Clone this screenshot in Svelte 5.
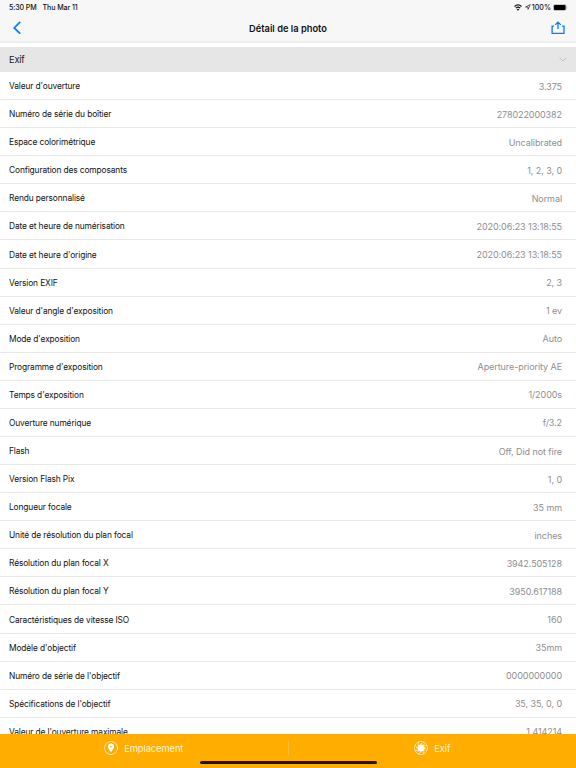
<script>
    const infos = [
        { nom: "Valeur d'ouverture", valeur: '3.375' },
        { nom: 'Numéro de série du boîtier', valeur: '278022000382' },
        { nom: 'Espace colorimétrique', valeur: 'Uncalibrated' },
        { nom: 'Configuration des composants', valeur: '1, 2, 3, 0' },
        { nom: 'Rendu personnalisé', valeur: 'Normal' },
        { nom: 'Date et heure de numérisation', valeur: '2020:06:23 13:18:55' },
        { nom: "Date et heure d'origine", valeur: '2020:06:23 13:18:55' },
        { nom: 'Version EXIF', valeur: '2, 3' },
        { nom: "Valeur d'angle d'exposition", valeur: '1 ev' },
        { nom: "Mode d'exposition", valeur: 'Auto' },
        { nom: "Programme d'exposition", valeur: 'Aperture-priority AE' },
        { nom: "Temps d'exposition", valeur: '1/2000s' },
        { nom: 'Ouverture numérique', valeur: 'f/3.2' },
        { nom: 'Flash', valeur: 'Off, Did not fire' },
        { nom: 'Version Flash Pix', valeur: '1, 0' },
        { nom: 'Longueur focale', valeur: '35 mm' },
        { nom: 'Unité de résolution du plan focal', valeur: 'inches' },
        { nom: 'Résolution du plan focal X', valeur: '3942.505128' },
        { nom: 'Résolution du plan focal Y', valeur: '3950.617188' },
        { nom: 'Caractéristiques de vitesse ISO', valeur: '160' },
        { nom: "Modèle d'objectif", valeur: '35mm' },
        { nom: "Numéro de série de l'objectif", valeur: '0000000000' },
        { nom: "Spécifications de l'objectif", valeur: '35, 35, 0, 0' },
        { nom: "Valeur de l'ouverture maximale", valeur: '1.414214' }
    ];
    const lames = [0, 45, 90, 135, 180, 225, 270, 315];

    let ouvert = $state(true);
</script>

<div class="ecran">
    <header>
        <div class="statut">
            <span class="heure">5:30 PM</span>
            <span class="date">Thu Mar 11</span>
            <div class="etat">
                <svg width="8" height="7" viewBox="0 0 8 7" fill="none" stroke="#111" stroke-width="1.2">
                    <path d="M0.5 2.5Q4 -0.7 7.5 2.5M1.8 4.1Q4 2.2 6.2 4.1" />
                    <path d="M4 6.7L2.7 5.4Q4 4.3 5.3 5.4Z" fill="#111" stroke="none" />
                </svg>
                <svg class="fleche" width="6" height="6" viewBox="0 0 6 6" fill="none" stroke="#222" stroke-width="0.7">
                    <path d="M0.5 3L5.3 0.6L3 5.4V3Z" />
                </svg>
                <span>100%</span>
                <svg class="pile" width="15" height="7" viewBox="0 0 15 7">
                    <rect x="0.3" y="0.4" width="12.9" height="6.1" rx="1.8" fill="#fff" stroke="#888" stroke-width="0.5" />
                    <rect x="0.9" y="1" width="11.7" height="4.9" rx="1.2" fill="#000" />
                    <path d="M13.8 2.4Q14.8 3.5 13.8 4.6Z" fill="#888" />
                </svg>
            </div>
        </div>
        <nav>
            <button class="retour" aria-label="Retour">
                <svg width="8" height="13" viewBox="0 0 8 13" fill="none" stroke="#0a7aff" stroke-width="1.7">
                    <path d="M7.2 0.9L1.2 6.9L7.2 12.7" />
                </svg>
            </button>
            <h1>Détail de la photo</h1>
            <button class="partage" aria-label="Partager">
                <svg width="14" height="13" viewBox="0 0 14 13" fill="none" stroke="#0a7aff" stroke-width="1.3">
                    <path d="M3 5.1H1.1V12.3H13V5.1H11.1M7 8V1.2M4.2 3.9L7 1.1L9.8 3.9" />
                </svg>
            </button>
        </nav>
    </header>

    <main>
        <button class="section" onclick={() => (ouvert = !ouvert)}>
            <span>Exif</span>
            <svg width="8" height="5" viewBox="0 0 8 5" fill="none" stroke="#bbb" stroke-width="0.9">
                <path d="M0.6 0.8L4 4L7.4 0.8" />
            </svg>
        </button>
        {#if ouvert}
            <ul>
                {#each infos as info}
                    <li>
                        <span class="nom">{info.nom}</span>
                        <span class="valeur">{info.valeur}</span>
                    </li>
                {/each}
            </ul>
        {/if}
    </main>

    <footer>
        <div class="onglets">
            <button class="onglet">
                <svg width="14" height="14" viewBox="0 0 14 14">
                    <circle cx="7" cy="7" r="6.5" fill="none" stroke="#fff" stroke-width="0.7" />
                    <path fill="#fff" fill-rule="evenodd" d="M7 2.4A3.1 3.1 0 0 0 3.9 5.5C3.9 7.6 6 9.2 7 11.6C8 9.2 10.1 7.6 10.1 5.5A3.1 3.1 0 0 0 7 2.4ZM7 4.7A0.9 0.9 0 1 1 7 6.5A0.9 0.9 0 1 1 7 4.7Z" />
                </svg>
                <span>Emplacement</span>
            </button>
            <button class="onglet exif">
                <svg width="14" height="14" viewBox="0 0 14 14" stroke="#fff" stroke-width="0.6">
                    <circle cx="7" cy="7" r="6.6" fill="none" />
                    <circle cx="7" cy="7" r="3.3" fill="#fff" />
                    {#each lames as angle}
                        <path d="M6 3.5L9.8 1.1" transform="rotate({angle} 7 7)" />
                    {/each}
                </svg>
                <span>Exif</span>
            </button>
        </div>
        <div class="accueil"></div>
    </footer>
</div>

<style>
    .ecran {
        display: flex;
        flex-direction: column;
        height: 768px;
        overflow: hidden;
        background: #fff;
        color: #111;
        font-family: Inter, 'Liberation Sans', sans-serif;
    }

    button {
        display: flex;
        align-items: center;
        margin: 0;
        padding: 0;
        border: none;
        background: none;
        font-family: inherit;
        cursor: pointer;
    }

    svg {
        display: block;
        flex: none;
    }

    header {
        flex: none;
        box-sizing: border-box;
        height: 43px;
        background: #f7f7f7;
        border-bottom: 2px solid #eee;
    }

    .statut {
        display: flex;
        align-items: center;
        height: 14px;
        padding: 0 8px 0 9px;
        font-size: 7.1px;
        font-weight: 500;
    }

    .heure {
        margin-right: 6px;
        letter-spacing: -0.14px;
    }

    .date {
        letter-spacing: -0.1px;
    }

    .etat {
        display: flex;
        align-items: center;
        margin-left: auto;
    }

    .fleche {
        margin: 0 1px 0 3px;
    }

    .pile {
        margin-left: 2px;
    }

    nav {
        display: grid;
        grid-template-columns: 1fr auto 1fr;
        align-items: center;
        height: 27px;
        padding: 0 11px 0 13px;
    }

    h1 {
        margin: 0 2px 0 0;
        padding-top: 1px;
        font-size: 9.3px;
        font-weight: 600;
    }

    .partage {
        justify-self: end;
    }

    main {
        flex: 1;
        min-height: 0;
        overflow: hidden;
        padding-top: 4px;
    }

    .section {
        box-sizing: border-box;
        width: 100%;
        height: 25px;
        justify-content: space-between;
        padding: 0 9px;
        background: #e6e6e6;
        color: #222;
        font-size: 9.3px;
        letter-spacing: -0.2px;
    }

    ul {
        margin: 0;
        padding: 0;
        list-style: none;
    }

    li {
        display: flex;
        box-sizing: border-box;
        align-items: center;
        justify-content: space-between;
        height: 28.08px;
        padding: 1px 14px 0 9px;
        border-bottom: 1px solid #e9e9e9;
    }

    .nom {
        font-size: 8.4px;
        letter-spacing: -0.125px;
    }

    .valeur {
        color: #8e8e8e;
        font-size: 9px;
        letter-spacing: -0.08px;
    }

    footer {
        flex: none;
        box-sizing: border-box;
        height: 34px;
        background: #ffae00;
    }

    .onglets {
        display: flex;
        height: 26px;
        padding-top: 1px;
    }

    .onglet {
        flex: 1;
        justify-content: center;
        gap: 6px;
        height: 26px;
        color: #fff3d6;
        font-size: 9.3px;
        letter-spacing: -0.05px;
    }

    .exif {
        height: 14px;
        margin-top: 6px;
        border-left: 1px solid #ffbe38;
    }

    .accueil {
        width: 177px;
        height: 3px;
        margin: 0 auto;
        border-radius: 2px;
        background: #1c1400;
    }
</style>
